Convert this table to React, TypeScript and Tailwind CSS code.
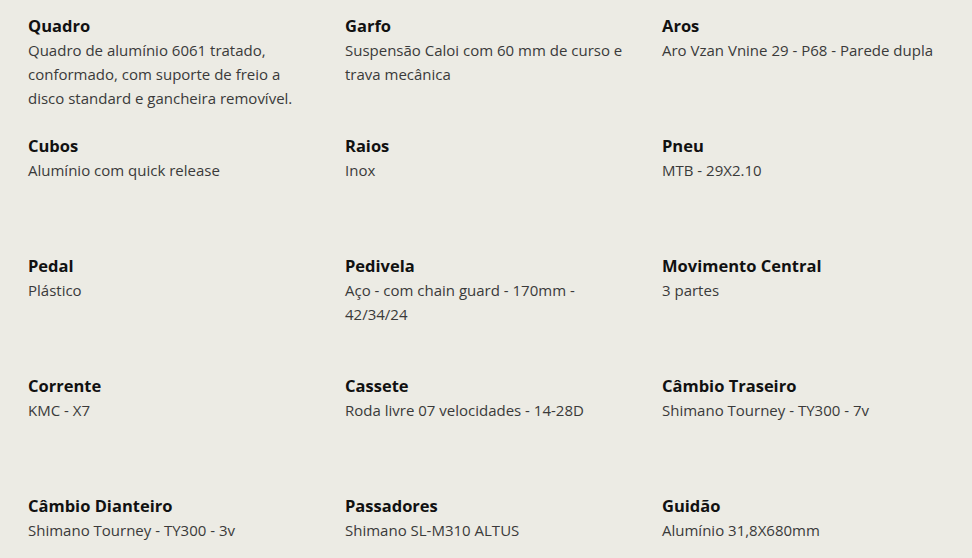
const specs = [
	{ title: "Quadro", text: "Quadro de alumínio 6061 tratado, conformado, com suporte de freio a disco standard e gancheira removível." },
	{ title: "Garfo", text: "Suspensão Caloi com 60 mm de curso e trava mecânica" },
	{ title: "Aros", text: "Aro Vzan Vnine 29 - P68 - Parede dupla" },
	{ title: "Cubos", text: "Alumínio com quick release" },
	{ title: "Raios", text: "Inox" },
	{ title: "Pneu", text: "MTB - 29X2.10" },
	{ title: "Pedal", text: "Plástico" },
	{ title: "Pedivela", text: "Aço - com chain guard - 170mm - 42/34/24" },
	{ title: "Movimento Central", text: "3 partes" },
	{ title: "Corrente", text: "KMC - X7" },
	{ title: "Cassete", text: "Roda livre 07 velocidades - 14-28D" },
	{ title: "Câmbio Traseiro", text: "Shimano Tourney - TY300 - 7v" },
	{ title: "Câmbio Dianteiro", text: "Shimano Tourney - TY300 - 3v" },
	{ title: "Passadores", text: "Shimano SL-M310 ALTUS" },
	{ title: "Guidão", text: "Alumínio 31,8X680mm" },
];

function SpecItem(props: { title: string; text: string }) {
	return (
		<div className="flex flex-col">
			<h3 className="text-[16.5px] leading-6 font-bold text-[#111111]">{props.title}</h3>
			<p className="text-[15px] leading-6 text-[#3a3a3a]">{props.text}</p>
		</div>
	);
}

export default function App() {
	return (
		<div
			className="w-[972px] h-[558px] overflow-hidden bg-[#ecebe4] pl-[28px] pt-[14px]"
			style={{ fontFamily: '"Open Sans", "Liberation Sans", sans-serif' }}
		>
			<div className="grid grid-cols-[290px_290px_290px] gap-x-[27px] gap-y-6 auto-rows-[96px]">
				{specs.map((s) => (
					<SpecItem key={s.title} title={s.title} text={s.text} />
				))}
			</div>
		</div>
	);
}
